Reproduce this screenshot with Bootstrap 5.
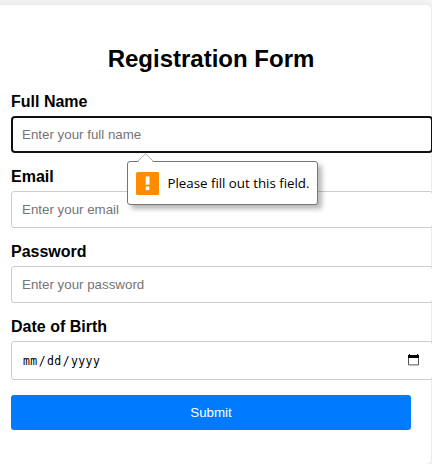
<!DOCTYPE html>
<html lang="en">
<head>
<meta charset="utf-8">
<meta name="viewport" content="width=device-width, initial-scale=1">
<title>Registration Form</title>
<link href="https://cdn.jsdelivr.net/npm/bootstrap@5.3.0/dist/css/bootstrap.min.css" rel="stylesheet">
<style>
html, body { height: 464px; }
body { background: #f6f6f6; font-family: "Liberation Sans", Arial, sans-serif; color: #000; }
.form-panel { width: 440px; height: 459px; margin: 5px 0 0 -9px; padding: 20px; border-radius: 5px; box-shadow: 0 0 10px rgba(0,0,0,.1); }
.form-title { font-size: 24px; line-height: 28px; margin: 20px 0 20px; }
.form-label { font-size: 16px; line-height: 18px; margin: 0 0 5px; }
.field { margin-bottom: 15px; }
.field .form-control { width: 422px; height: 37px; padding: 10px; font-size: 13.33px; line-height: 15px; border: 1px solid #ccc; border-radius: 3px; color: #000; box-shadow: none; }
.field .form-control::placeholder { color: #757575; }
.field .form-control.is-active { border: 2px solid #101010; border-radius: 4px; padding: 9px; }
.field .date-input { height: 39px; }
.date-text { margin: 1px 0 0 1px; font-family: "DejaVu Sans Mono", monospace; font-size: 11.5px; letter-spacing: .4px; }
.date-sep { margin: 0 1px; }
.date-input svg { margin: 0 3px 1px 0; }
.btn-submit { height: 35px; margin-top: 15px; padding: 0; font-size: 13.33px; line-height: 15px; border-radius: 3px; background: #007bff; color: #fff; }
.hint { left: 116px; top: 68px; width: 191px; height: 44px; padding-left: 8px; border: 1px solid #767676; border-radius: 3px; box-shadow: 4px 4px 5px rgba(0,0,0,.28); z-index: 5; font-family: "Open Sans", "Noto Sans", sans-serif; font-size: 13.33px; letter-spacing: -.02px; }
.hint-arrow { left: 9px; top: -9px; }
.hint-text { margin-left: 8.5px; line-height: 18px; }
</style>
</head>
<body class="overflow-hidden">
<main class="form-panel bg-white">
  <h2 class="form-title fw-bold text-center">Registration Form</h2>
  <form novalidate>
    <div class="field position-relative">
      <label class="form-label d-block fw-bold" for="name">Full Name</label>
      <input class="form-control is-active" id="name" type="text" placeholder="Enter your full name">
      <div class="hint position-absolute d-flex align-items-center bg-white text-nowrap" role="alert">
        <svg class="hint-arrow position-absolute" width="18" height="10" viewBox="0 0 18 10"><path d="M.5 9.5 8.5 1.2 16.5 9.5V10H.5Z" fill="#fff"/><path d="M.5 8.5 8.5.8 16.5 8.5" fill="none" stroke="#aaa"/></svg>
        <svg width="23" height="23" viewBox="0 0 23 23"><rect width="23" height="23" rx="1.5" fill="#ff8c00"/><path d="M9.7 4.5h3.8v8.3H9.7zM9.7 14.5h3.6V18H9.7z" fill="#fff"/></svg>
        <span class="hint-text">Please fill out this field.</span>
      </div>
    </div>
    <div class="field">
      <label class="form-label d-block fw-bold" for="email">Email</label>
      <input class="form-control" id="email" type="email" placeholder="Enter your email">
    </div>
    <div class="field">
      <label class="form-label d-block fw-bold" for="password">Password</label>
      <input class="form-control" id="password" type="password" placeholder="Enter your password">
    </div>
    <div class="field">
      <label class="form-label d-block fw-bold" id="dob">Date of Birth</label>
      <div class="form-control date-input d-flex align-items-center justify-content-between" role="group" aria-labelledby="dob">
        <span class="date-text"><span>mm</span><span class="date-sep">/</span><span>dd</span><span class="date-sep">/</span><span>yyyy</span></span>
        <svg width="11" height="12" viewBox="0 0 11 12"><path d="M.5 2.5h10v8.4H.5z" fill="none" stroke="#555"/><path d="M0 1h1V0h1v1h7V0h1v1h1v3H0z"/></svg>
      </div>
    </div>
    <button class="btn btn-submit w-100 border-0 d-block" type="submit">Submit</button>
  </form>
</main>
<script src="https://cdn.jsdelivr.net/npm/bootstrap@5.3.0/dist/js/bootstrap.bundle.min.js"></script>
</body>
</html>
